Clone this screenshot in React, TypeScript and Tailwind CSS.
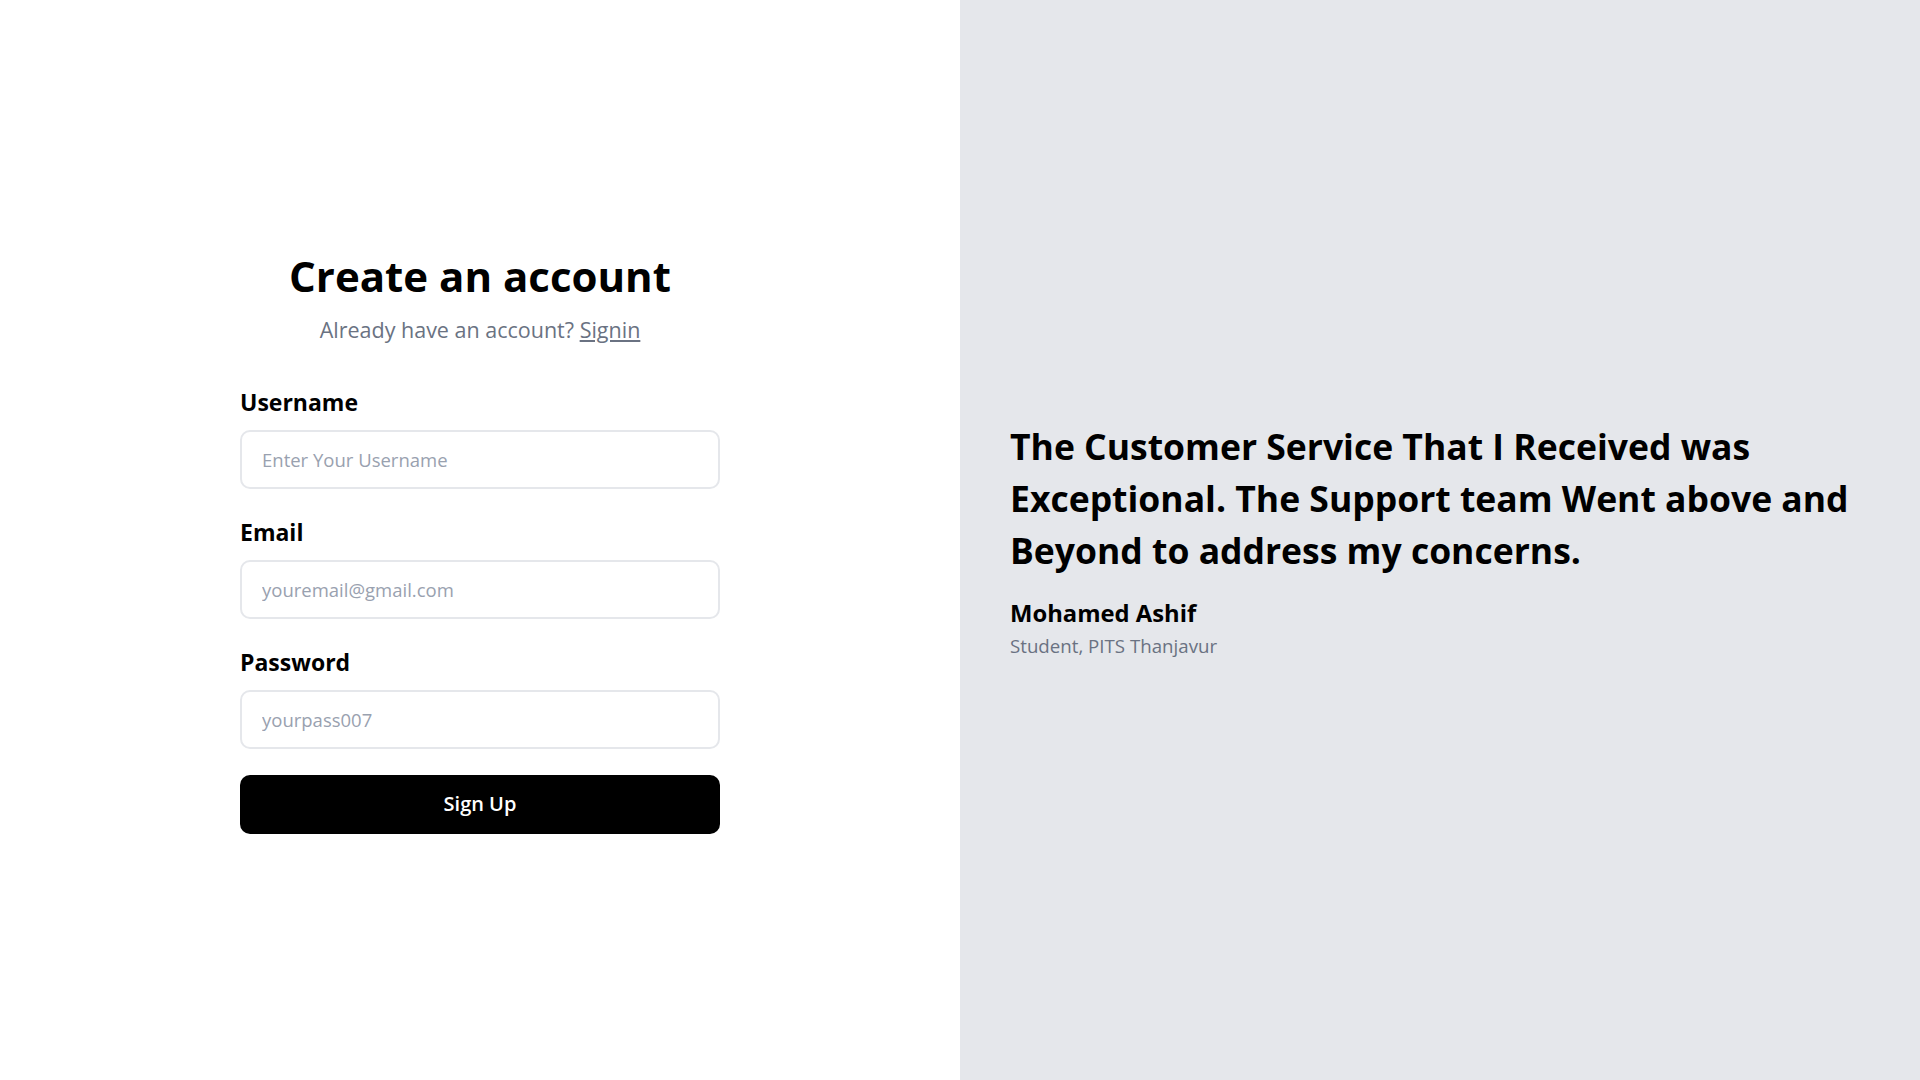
import React from "react";

export default function App() {
  return (
    <div className="flex h-screen w-full font-['Open_Sans','Noto_Sans',sans-serif]">
      <div className="flex w-1/2 items-center justify-center bg-white">
        <div className="w-[480px]">
          <h1 className="text-center text-[42px] font-bold leading-[58px] text-black">
            Create an account
          </h1>
          <p className="mt-[10px] text-center text-[21.5px] leading-[30px] text-gray-500">
            Already have an account?{" "}
            <a href="#" className="underline">
              Signin
            </a>
          </p>
          <form className="mt-[40px] flex flex-col gap-[26px]" onSubmit={(e) => e.preventDefault()}>
            <div>
              <label className="mb-[10px] block text-[23px] font-bold leading-[35px] text-black">
                Username
              </label>
              <input
                type="text"
                placeholder="Enter Your Username"
                className="h-[59px] w-full rounded-[10px] border-2 border-gray-200 px-5 text-[18.5px] text-black outline-none placeholder:text-gray-400"
              />
            </div>
            <div>
              <label className="mb-[10px] block text-[23px] font-bold leading-[35px] text-black">
                Email
              </label>
              <input
                type="email"
                placeholder="youremail@gmail.com"
                className="h-[59px] w-full rounded-[10px] border-2 border-gray-200 px-5 text-[18.5px] text-black outline-none placeholder:text-gray-400"
              />
            </div>
            <div>
              <label className="mb-[10px] block text-[23px] font-bold leading-[35px] text-black">
                Password
              </label>
              <input
                type="password"
                placeholder="yourpass007"
                className="h-[59px] w-full rounded-[10px] border-2 border-gray-200 px-5 text-[18.5px] text-black outline-none placeholder:text-gray-400"
              />
            </div>
            <button
              type="submit"
              className="h-[59px] w-full rounded-[10px] bg-black text-[20px] font-semibold text-white"
            >
              Sign Up
            </button>
          </form>
        </div>
      </div>
      <div className="flex w-1/2 items-center bg-gray-200 px-[50px]">
        <div>
          <p className="text-[35.5px] font-bold leading-[52px] text-black">
            The Customer Service That I Received was Exceptional. The Support team Went above and
            Beyond to address my concerns.
          </p>
          <p className="mt-[20px] text-[23.8px] font-bold leading-[35px] text-black">Mohamed Ashif</p>
          <p className="text-[18.7px] leading-[30px] text-gray-500">Student, PITS Thanjavur</p>
        </div>
      </div>
    </div>
  );
}
